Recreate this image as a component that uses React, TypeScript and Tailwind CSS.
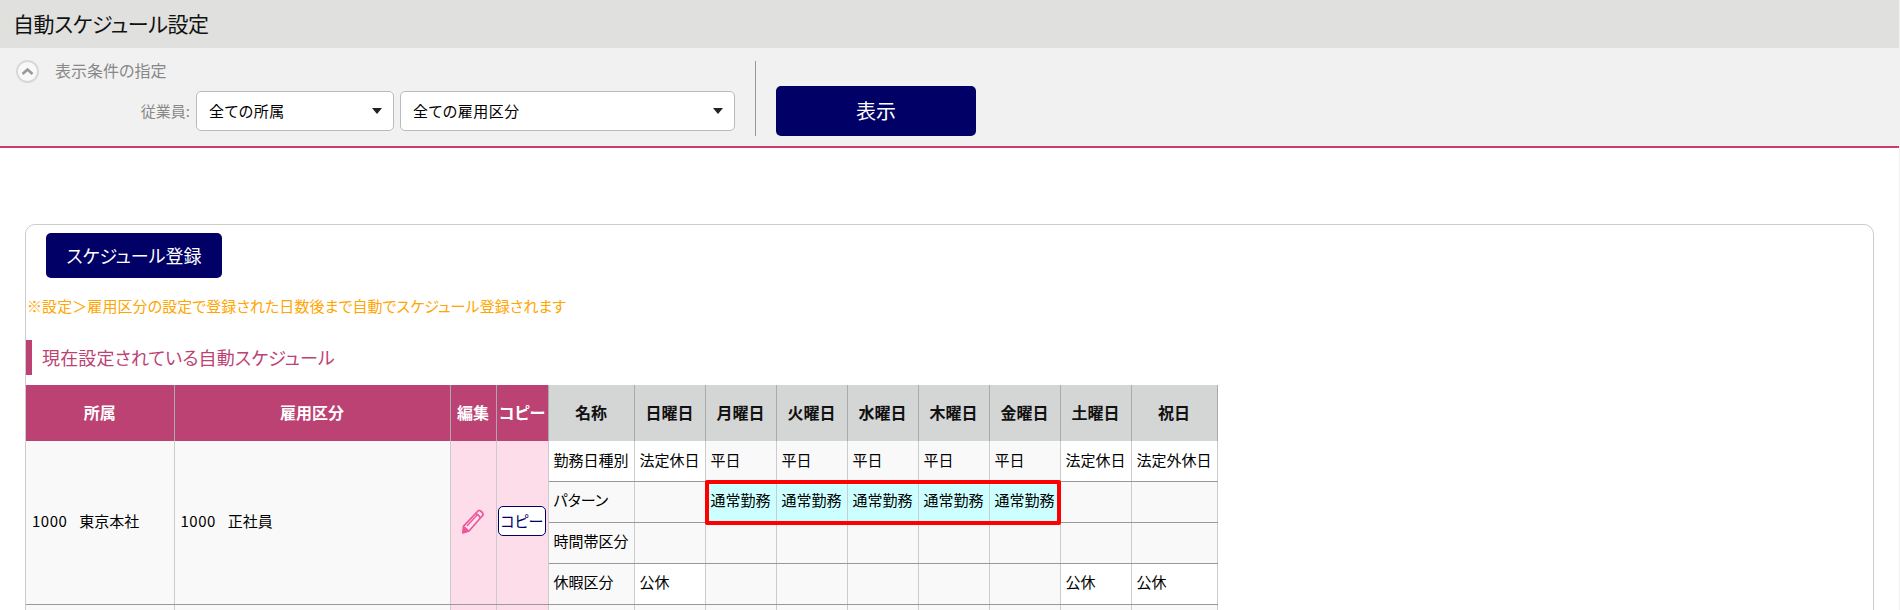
const days = ["日曜日", "月曜日", "火曜日", "水曜日", "木曜日", "金曜日", "土曜日", "祝日"];

const rows = [
  { name: "勤務日種別", nameBg: "bg-white", height: "h-[40px]", cells: ["法定休日", "平日", "平日", "平日", "平日", "平日", "法定休日", "法定外休日"] },
  { name: "パターン", nameBg: "bg-[#f9f9f9]", height: "h-[41px]", cells: ["", "通常勤務", "通常勤務", "通常勤務", "通常勤務", "通常勤務", "", ""] },
  { name: "時間帯区分", nameBg: "bg-[#f9f9f9]", height: "h-[41px]", cells: ["", "", "", "", "", "", "", ""] },
  { name: "休暇区分", nameBg: "bg-[#f9f9f9]", height: "h-[41px]", cells: ["公休", "", "", "", "", "", "公休", "公休"] },
];

const whiteValues = ["法定休日", "法定外休日", "公休"];

function cellBg(value: string) {
  if (value === "通常勤務") return "bg-[#ccffff]";
  if (whiteValues.includes(value)) return "bg-white";
  return "bg-[#f9f9f9]";
}

function SelectBox({ label, width }: { label: string; width: string }) {
  return (
    <div className={`${width} h-10 flex items-center justify-between bg-white border border-[#bbb] rounded-[5px] pl-3 pr-[11px] text-[15px] tracking-[0.5px] text-black`}>
      <span>{label}</span>
      <svg width="10" height="6" viewBox="0 0 10 6">
        <path d="M0 0H10L5 6Z" fill="#222" />
      </svg>
    </div>
  );
}

function PencilIcon() {
  return (
    <svg width="24" height="25" viewBox="0 0 24 25" fill="none" className="mx-auto">
      <path d="M17.5 1.5C19 0.8 22.6 4 22 6L8 22L1.8 23.8L2.6 17.2Z" fill="#fde8f1" stroke="#f0559c" strokeWidth="1.8" strokeLinejoin="round" />
      <path d="M2.6 17.2C4.5 17.4 7.2 19.8 8 22L1.8 23.8Z" fill="#f0559c" />
      <path d="M15 5C16.8 5.4 18.6 7 19.2 9M6 17L17 5" stroke="#f0559c" strokeWidth="1.4" />
    </svg>
  );
}

function CodeName({ code, name }: { code: string; name: string }) {
  return (
    <>
      <span className="tracking-[0.5px]">{code}</span>
      <span className="ml-3">{name}</span>
    </>
  );
}

export default function App() {
  const headCell = "border-r border-r-[#aaa] font-bold text-[16px] pb-[2px]";
  const cell = "border-r border-r-[#ccc] border-b border-b-[#999] text-[15px] text-black px-[5px] pb-[2px] whitespace-nowrap overflow-hidden";

  return (
    <div className="h-screen overflow-hidden bg-white border-r border-r-[#f1f1f1] [font-family:'Noto_Sans_CJK_JP',sans-serif] [font-feature-settings:'palt']">
      <div className="h-12 bg-[#e0e0de] flex items-center pl-[13px] text-[21px] tracking-[-0.4px] text-[#111]">
        自動スケジュール設定
      </div>

      <div className="h-[100px] bg-[#f1f1f1] border-b-2 border-b-[#cc3a72] flex items-start pt-3 pb-[10px]">
        <div className="w-[755px]">
          <div className="flex items-center h-[23px] pl-4">
            <div className="w-[23px] h-[23px] rounded-full border-2 border-[#d8d8d8] bg-[#f8f8f8] flex items-center justify-center">
              <svg width="13" height="9" viewBox="0 0 13 9" fill="none">
                <path d="M1.5 7L6.5 2.5L11.5 7" stroke="#999" strokeWidth="2.6" />
              </svg>
            </div>
            <span className="ml-4 pb-[3px] text-[16px] text-[#888]">表示条件の指定</span>
          </div>
          <div className="flex items-center mt-[8px]">
            <span className="w-[190px] text-right text-[15px] text-[#888]">従業員:</span>
            <div className="ml-[6px]">
              <SelectBox label="全ての所属" width="w-[198px]" />
            </div>
            <div className="ml-[6px]">
              <SelectBox label="全ての雇用区分" width="w-[335px]" />
            </div>
          </div>
        </div>
        <div className="mt-px w-px h-[75px] bg-[#999]" />
        <button className="ml-5 mt-[26px] w-[200px] h-[50px] bg-[#000066] rounded-[5px] text-white text-[20px]">
          表示
        </button>
      </div>

      <div className="mt-[76px] ml-[25px] w-[1849px] border border-[#ccc] rounded-t-[10px] pt-2">
        <button className="ml-5 w-[176px] h-[45px] bg-[#000066] rounded-[5px] text-white text-[18px]">
          スケジュール登録
        </button>
        <p className="mt-[18px] h-5 leading-5 text-[15px] tracking-[0.08px] text-[#ffa500] pl-px">
          ※設定＞雇用区分の設定で登録された日数後まで自動でスケジュール登録されます
        </p>
        <h2 className="mt-[24px] h-[35px] border-l-[6px] border-l-[#bc4273] pl-[10px] flex items-center text-[18px] tracking-[0.15px] font-normal text-[#bc4273]">
          現在設定されている自動スケジュール
        </h2>

        <div className="relative mt-[10px] w-[1191px]">
          <table className="table-fixed border-collapse w-[1191px]">
            <colgroup>
              <col className="w-[148px]" />
              <col className="w-[276px]" />
              <col className="w-[46px]" />
              <col className="w-[52px]" />
              <col className="w-[86px]" />
              <col className="w-[71px]" />
              <col className="w-[71px]" />
              <col className="w-[71px]" />
              <col className="w-[71px]" />
              <col className="w-[71px]" />
              <col className="w-[71px]" />
              <col className="w-[71px]" />
              <col className="w-[86px]" />
            </colgroup>
            <thead>
              <tr className="h-14">
                <th className={`${headCell} bg-[#bc4273] text-white`}>所属</th>
                <th className={`${headCell} bg-[#bc4273] text-white`}>雇用区分</th>
                <th className={`${headCell} bg-[#bc4273] text-white`}>編集</th>
                <th className={`${headCell} bg-[#bc4273] text-white`}>コピー</th>
                <th className={`${headCell} bg-[#d4d5d5] text-[#111]`}>名称</th>
                {days.map((d) => (
                  <th key={d} className={`${headCell} bg-[#d4d5d5] text-[#111]`}>{d}</th>
                ))}
              </tr>
            </thead>
            <tbody>
              {rows.map((row, i) => (
                <tr key={row.name} className={row.height}>
                  {i === 0 && (
                    <>
                      <td rowSpan={4} className={`${cell} bg-[#f9f9f9] !px-[6px]`}>
                        <CodeName code="1000" name="東京本社" />
                      </td>
                      <td rowSpan={4} className={`${cell} bg-[#f9f9f9] !px-[6px]`}>
                        <CodeName code="1000" name="正社員" />
                      </td>
                      <td rowSpan={4} className={`${cell} bg-[#fcdde9] !px-0`}>
                        <PencilIcon />
                      </td>
                      <td rowSpan={4} className={`${cell} bg-[#fcdde9] !px-[1px]`}>
                        <button className="block mx-auto w-[48px] h-[30px] bg-white border border-[#000066] rounded-[5px] text-[15px] text-[#000066]">
                          コピー
                        </button>
                      </td>
                    </>
                  )}
                  <td className={`${cell} ${row.nameBg}`}>{row.name}</td>
                  {row.cells.map((value, j) => (
                    <td key={j} className={`${cell} ${cellBg(value)}`}>{value}</td>
                  ))}
                </tr>
              ))}
              <tr className="h-[41px]">
                <td className={`${cell} bg-[#f9f9f9]`} />
                <td className={`${cell} bg-[#f9f9f9]`} />
                <td className={`${cell} bg-[#fcdde9]`} />
                <td className={`${cell} bg-[#fcdde9]`} />
                {Array.from({ length: 9 }).map((_, j) => (
                  <td key={j} className={`${cell} bg-[#f9f9f9]`} />
                ))}
              </tr>
            </tbody>
          </table>
          {/* red highlight over the weekday pattern cells */}
          <div className="absolute left-[679px] top-[95px] w-[356px] h-[45px] border-4 border-[#ff0000] rounded-[2px] pointer-events-none" />
        </div>
      </div>
    </div>
  );
}
